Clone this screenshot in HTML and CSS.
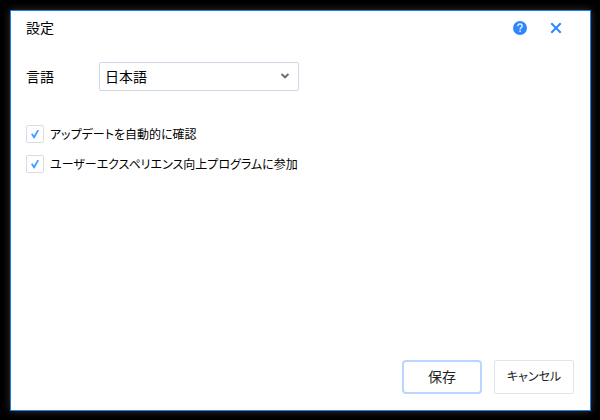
FILE: index.html
```
<!DOCTYPE html>
<html lang="ja">
<head>
<meta charset="utf-8">
<title>設定</title>
<link rel="stylesheet" href="styles.css">
</head>
<body>
<main class="dialog">
  <header class="titlebar">
    <h1 class="title">設定</h1>
    <button class="icon-button" type="button" aria-label="ヘルプ">
      <svg width="14" height="14" viewBox="0 0 14 14"><circle cx="7" cy="7" r="7" fill="#2f87ff"/><path d="M4.8 5.2C4.8 3.7 5.7 3 7 3s2.2.8 2.2 2c0 1.500-2.100 1.600-2.100 3.400M7.100 9.600v1.500" fill="none" stroke="#e3efff" stroke-width="1.500"/></svg>
    </button>
    <button class="icon-button" type="button" aria-label="閉じる">
      <svg width="14" height="14" viewBox="0 0 14 14"><path d="M3 3l8 8M11 3l-8 8" fill="none" stroke="#2f87ff" stroke-width="2" stroke-linecap="square"/></svg>
    </button>
  </header>
  <form class="content">
    <div class="field">
      <label for="language">言語</label>
      <div class="select-wrap">
        <select id="language"><option>日本語</option></select>
        <svg class="chevron" width="10" height="6" viewBox="0 0 10 6"><path d="M1.500 1l3.500 3.300L8.500 1" fill="none" stroke="#707070" stroke-width="2"/></svg>
      </div>
    </div>
    <div class="options">
      <label class="option"><input type="checkbox" checked><span>アップデートを自動的に確認</span></label>
      <label class="option"><input type="checkbox" checked><span>ユーザーエクスペリエンス向上プログラムに参加</span></label>
    </div>
    <footer class="actions">
      <button class="button primary" type="button">保存</button>
      <button class="button compact" type="button">キャンセル</button>
    </footer>
  </form>
</main>
</body>
</html>
```
FILE: styles.css
```
* {
  box-sizing: border-box;
}

body {
  display: flex;
  min-height: 100vh;
  margin: 0;
  padding: 10px 9px 9px 10px;
  background: #000;
  color: #000;
  font: 14px/20px "Noto Sans CJK JP", sans-serif;
  font-feature-settings: "palt";
}

button,
select {
  font: inherit;
  font-feature-settings: inherit;
  color: inherit;
}

.dialog {
  display: flex;
  flex: 1;
  flex-direction: column;
  border: 1px solid #1684e0;
  background: #fff;
  box-shadow: 0 0 8px #333;
}

.titlebar {
  display: flex;
  align-items: center;
  gap: 12px;
  height: 34px;
  padding: 0 22px 0 15px;
}

.title {
  flex: 1;
  margin: 0;
  padding-bottom: 2px;
  font: inherit;
}

.icon-button {
  display: grid;
  place-items: center;
  width: 24px;
  height: 24px;
  padding: 0;
  border: 0;
  background: none;
}

.content {
  display: flex;
  flex: 1;
  flex-direction: column;
  padding: 17px 16px 16px 15px;
}

.field {
  display: flex;
  align-items: center;
}

.field label {
  width: 73px;
  padding-bottom: 2px;
}

.select-wrap {
  position: relative;
  width: 200px;
}

.select-wrap select {
  display: block;
  width: 100%;
  height: 29px;
  padding: 0 24px 2px 5px;
  border: 1px solid #ced8e6;
  border-radius: 2px;
  background: #fff;
  appearance: none;
}

.chevron {
  position: absolute;
  top: 11px;
  right: 9px;
  pointer-events: none;
}

.options {
  display: grid;
  justify-items: start;
  gap: 10px;
  margin-top: 33px;
  font-size: 12px;
}

.option {
  display: flex;
  align-items: center;
  gap: 6px;
}

.option input {
  display: grid;
  place-items: center;
  width: 18px;
  height: 18px;
  margin: 0;
  border: 1px solid #d9dde3;
  border-radius: 2px;
  background: #fff;
  appearance: none;
}

.option input:checked::before {
  content: "";
  width: 8px;
  height: 9px;
  background: #409fff;
  clip-path: polygon(0 54%, 18% 42%, 38% 66%, 82% 0, 100% 12%, 44% 100%, 34% 100%);
}

.actions {
  display: flex;
  justify-content: flex-end;
  gap: 12px;
  margin-top: auto;
}

.button {
  width: 80px;
  height: 34px;
  padding: 0 0 2px;
  border: 1px solid #dfe5ed;
  border-radius: 2px;
  background: #fff;
  color: #222;
}

.primary {
  border: 2px solid #bad6ff;
  border-radius: 4px;
}

.compact {
  font-size: 12px;
}
```
